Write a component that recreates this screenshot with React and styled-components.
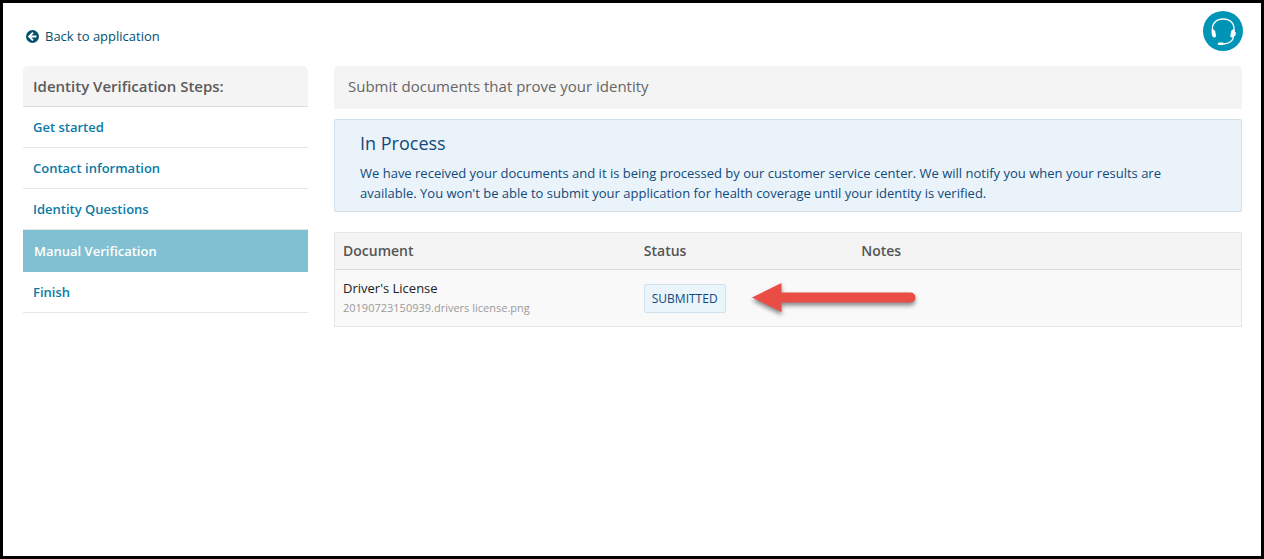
import React from 'react';
import styled, { createGlobalStyle, css } from 'styled-components';

const GlobalStyle = createGlobalStyle`
  * {
    box-sizing: border-box;
  }

  body {
    margin: 0;
    background: #fff;
    color: #212121;
    font-family: "Open Sans", sans-serif;
    font-size: 13px;
    line-height: 20px;
  }
`;

const Page = styled.div`
  min-height: 100vh;
  padding: 8px 18px 20px 20px;
  border: 3px solid #000;
`;

const TopBar = styled.header`
  display: flex;
  align-items: center;
  justify-content: space-between;
  height: 40px;
  margin-bottom: 15px;
`;

const BackLink = styled.a`
  display: flex;
  align-items: center;
  gap: 6px;
  padding: 10px 3px 0;
  color: #04506f;
  text-decoration: none;
`;

const SupportButton = styled.button`
  width: 40px;
  height: 40px;
  padding: 0;
  border: 0;
  border-radius: 50%;
  background: #0095b6;
  cursor: pointer;

  svg {
    display: block;
  }
`;

const Columns = styled.div`
  display: flex;
  align-items: flex-start;
  gap: 26px;
  padding-right: 1px;
`;

const Sidebar = styled.nav`
  flex: 0 0 285px;
`;

const SidebarTitle = styled.h2`
  margin: 0;
  padding: 10px;
  border-bottom: 1px solid #dcdcdc;
  border-radius: 5px 5px 0 0;
  background: #f4f4f4;
  color: #5b5b5b;
  font-size: 15px;
  font-weight: 600;
  line-height: 20px;
`;

const StepList = styled.ul`
  margin: 0;
  padding: 0;
  list-style: none;
`;

const StepLink = styled.a`
  display: block;
  padding: 10px;
  border-bottom: 1px solid #e6e6e6;
  color: #0a7aa6;
  font-weight: 600;
  text-decoration: none;

  ${({ $active }) => $active && css`
    padding: 11px;
    border-bottom: 0;
    background: #80c0d2;
    color: #fff;
  `}
`;

const Main = styled.main`
  flex: 1;
  min-width: 0;
`;

const MainTitle = styled.h1`
  margin: 0 0 10px;
  padding: 10px 14px 13px;
  border-radius: 5px 5px 0 0;
  background: #f4f4f4;
  color: #666;
  font-size: 15px;
  font-weight: 400;
  line-height: 20px;
`;

const Notice = styled.section`
  margin-bottom: 20px;
  padding: 11px 25px 8px;
  border: 1px solid #d0e1ea;
  border-radius: 2px;
  background: #eaf3fa;
  color: #11497b;

  h3 {
    margin: 0 0 7px;
    font-size: 18px;
    font-weight: 400;
    line-height: 25px;
  }

  p {
    margin: 0;
  }
`;

const Table = styled.table`
  width: 100%;
  border: 1px solid #e6e6e6;
  border-spacing: 0;
  background: #f9f9f9;
  table-layout: fixed;
  text-align: left;
`;

const HeadCell = styled.th`
  width: ${({ $width }) => $width};
  padding: 8px;
  border-bottom: 1px solid #dcdcdc;
  background: #f4f4f4;
  color: #555;
  font-size: 14px;
  font-weight: 600;
`;

const Cell = styled.td`
  position: relative;
  height: 56px;
  padding: 8px;
`;

const FileName = styled.div`
  color: #999;
  font-size: 11px;
`;

const Badge = styled.span`
  display: block;
  width: fit-content;
  padding: 4px 7px;
  border: 1px solid #cfe2ee;
  border-radius: 2px;
  background: #eaf5fb;
  color: #11497b;
  font-size: 12px;
  line-height: 19px;
`;

const Pointer = styled.svg`
  position: absolute;
  top: 8px;
  left: 112px;
  z-index: 1;
  filter: drop-shadow(0 3px 2px rgba(0, 0, 0, 0.45));
`;

const steps = [
  'Get started',
  'Contact information',
  'Identity Questions',
  'Manual Verification',
  'Finish',
];

const currentStep = 'Manual Verification';

const documents = [
  { name: "Driver's License", file: '20190723150939.drivers license.png', status: 'SUBMITTED', notes: '' },
];

function BackIcon() {
  return (
    <svg width="13" height="13" viewBox="0 0 13 13" aria-hidden="true">
      <circle cx="6.5" cy="6.5" r="6.5" fill="#04506f" />
      <path d="M7 2.6 3.1 6.5 7 10.4M3.6 6.5h6.8" fill="none" stroke="#fff" strokeWidth="1.8" />
    </svg>
  );
}

function HeadsetIcon() {
  return (
    <svg width="40" height="40" viewBox="0 0 40 40" aria-hidden="true">
      <path
        d="M9.6 21C8 13 13 8 20.2 8S32.400 13 30.800 21M30.600 25.500C30 29.500 26.500 32.600 20.500 33"
        fill="none"
        stroke="#fff"
        strokeWidth="1.3"
      />
      <path
        d="M9 18.500c1.400-.3 2.600.2 3.200 1.800l.8 4.200c.1 1.200-.4 1.900-1.400 2-1.300.1-2.100-.7-2.500-2.200-.5-1.800-.8-4-.1-5.800zM31.400 18.500c-1.400-.3-2.600.2-3.200 1.800l-.8 4.200c-.1 1.200.4 1.900 1.400 2 1 .1 1.900-.4 2.400-1.300l1.300-.7.300-3.200-1-.5z"
        fill="#fff"
      />
      <rect x="14.800" y="31.600" width="6" height="2.400" rx="1.200" fill="#fff" />
    </svg>
  );
}

function ArrowPointer() {
  return (
    <Pointer width="174" height="36" viewBox="0 0 174 36" aria-hidden="true">
      <path d="M4 19.5 33.500 5v9.500h129a5 5 0 0 1 0 10h-129V34z" fill="#ea4c46" />
    </Pointer>
  );
}

function App() {
  return (
    <Page>
      <GlobalStyle />
      <TopBar>
        <BackLink href="#application">
          <BackIcon />
          Back to application
        </BackLink>
        <SupportButton type="button" aria-label="Support">
          <HeadsetIcon />
        </SupportButton>
      </TopBar>

      <Columns>
        <Sidebar>
          <SidebarTitle>Identity Verification Steps:</SidebarTitle>
          <StepList>
            {steps.map((step) => (
              <li key={step}>
                <StepLink href="#step" $active={step === currentStep}>{step}</StepLink>
              </li>
            ))}
          </StepList>
        </Sidebar>

        <Main>
          <MainTitle>Submit documents that prove your identity</MainTitle>
          <Notice>
            <h3>In Process</h3>
            <p>
              We have received your documents and it is being processed by our customer service center.
              We will notify you when your results are available. You won't be able to submit your
              application for health coverage until your identity is verified.
            </p>
          </Notice>
          <Table>
            <thead>
              <tr>
                <HeadCell $width="33.2%">Document</HeadCell>
                <HeadCell $width="24%">Status</HeadCell>
                <HeadCell>Notes</HeadCell>
              </tr>
            </thead>
            <tbody>
              {documents.map((doc) => (
                <tr key={doc.file}>
                  <Cell>
                    {doc.name}
                    <FileName>{doc.file}</FileName>
                  </Cell>
                  <Cell>
                    <Badge>{doc.status}</Badge>
                    <ArrowPointer />
                  </Cell>
                  <Cell>{doc.notes}</Cell>
                </tr>
              ))}
            </tbody>
          </Table>
        </Main>
      </Columns>
    </Page>
  );
}

export default App;
